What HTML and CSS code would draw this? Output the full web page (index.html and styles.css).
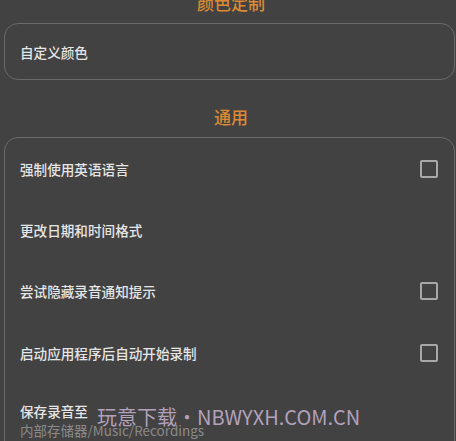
FILE: index.html
```html
<!doctype html>
<html lang="zh-CN">

<head>
    <meta charset="utf-8">
    <title>设置</title>
    <link rel="stylesheet" href="styles.css">
</head>

<body>
    <div class="page">
        <div class="section_title">颜色定制</div>
        <div class="card">
            <div class="row row_short">
                <div class="row_text">自定义颜色</div>
            </div>
        </div>

        <div class="section_title">通用</div>
        <div class="card">
            <div class="row">
                <div class="row_text">强制使用英语语言</div>
                <span class="checkbox"></span>
            </div>
            <div class="row">
                <div class="row_text">更改日期和时间格式</div>
            </div>
            <div class="row">
                <div class="row_text">尝试隐藏录音通知提示</div>
                <span class="checkbox"></span>
            </div>
            <div class="row">
                <div class="row_text">启动应用程序后自动开始录制</div>
                <span class="checkbox"></span>
            </div>
            <div class="row row_two">
                <div class="row_text">保存录音至</div>
                <div class="row_sub">内部存储器/Music/Recordings</div>
            </div>
        </div>
    </div>
    <div class="watermark">玩意下载・NBWYXH.COM.CN</div>
</body>

</html>
```

FILE: styles.css
```css
html, body {
    margin: 0;
    padding: 0;
    background: #424242;
    overflow: hidden;
}

body {
    font-family: "Noto Sans CJK SC", "Noto Sans", sans-serif;
    color: #e6e6e6;
    width: 456px;
    height: 441px;
    position: relative;
}

.page {
    margin-top: -34px;
}

.section_title {
    padding: 27px 0 10px 6px;
    line-height: 20px;
    font-size: 17px;
    font-weight: 500;
    text-align: center;
    color: #dc8a34;
}

.card {
    margin: 0 1px 0 4px;
    border: 1.5px solid #6a6a6a;
    border-radius: 14px;
}

.row {
    display: flex;
    align-items: center;
    justify-content: space-between;
    height: 61.3px;
    padding: 0 16px 0 15px;
}

.row_short {
    height: 55px;
}

.row_text {
    font-size: 13.6px;
    line-height: 20px;
    font-weight: 500;
}

.row_two {
    flex-direction: column;
    align-items: flex-start;
    justify-content: flex-start;
    padding-top: 18px;
}

.row_sub {
    font-size: 13.5px;
    line-height: 18px;
    color: #8a8a8a;
}

.checkbox {
    width: 14px;
    height: 14px;
    border: 2px solid #a8a8a8;
    border-radius: 2px;
}

.watermark {
    position: absolute;
    left: 97px;
    top: 404px;
    font-size: 20px;
    line-height: 26px;
    color: rgba(200, 180, 210, 0.85);
    white-space: nowrap;
}
```
